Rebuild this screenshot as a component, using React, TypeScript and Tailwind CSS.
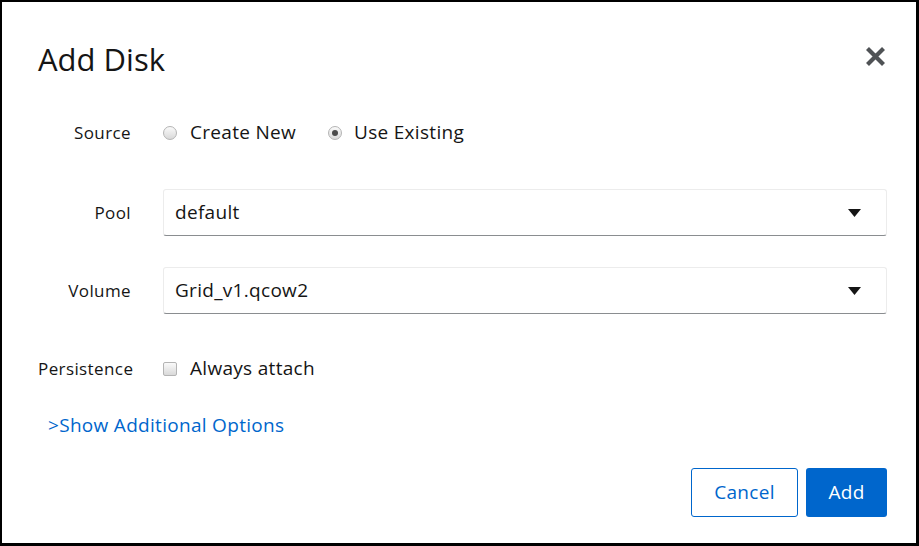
import { useState } from 'react'

const font = { fontFamily: '"Open Sans", "Liberation Sans", sans-serif' }

function Radio({ checked }: { checked?: boolean }) {
  return (
    <span className="flex h-[14px] w-[14px] items-center justify-center rounded-full border border-[#b4b4b4] bg-gradient-to-b from-[#fafafa] to-[#d9d9d9]">
      {checked && <span className="h-[6px] w-[6px] rounded-full bg-[#4a4a4a]" />}
    </span>
  )
}

function Caret() {
  return (
    <svg width="13" height="8" viewBox="0 0 13 8" aria-hidden="true">
      <path d="M0 0h13L6.5 8z" fill="#151515" />
    </svg>
  )
}

function SelectBox({ value }: { value: string }) {
  return (
    <div className="flex h-[47px] w-full items-center justify-between rounded-[3px] border border-[#ececec] border-b-[#8a8d90] pl-[11px] pr-[25px] text-[19px] tracking-[0.3px] text-[#151515]">
      <span>{value}</span>
      <Caret />
    </div>
  )
}

function Label({ children }: { children: string }) {
  return <div className="text-right text-[17px] tracking-[0.4px] text-[#151515]">{children}</div>
}

export default function App() {
  const [source] = useState('existing')

  return (
    <div
      style={font}
      className="flex h-[546px] w-[919px] flex-col border-t-2 border-l-2 border-r-[3px] border-b-[3px] border-black bg-white pl-[36px] pr-[29px]"
    >
      {/* Header */}
      <div className="flex items-start justify-between pt-[39px]">
        <h1 className="text-[31px] leading-[36px] text-[#151515]">Add Disk</h1>
        <button className="mt-[5px] mr-[1px]" aria-label="Close">
          <svg width="21" height="21" viewBox="0 0 21 21" aria-hidden="true">
            <path d="M2.5 2.5l16 16M18.5 2.5l-16 16" stroke="#4f5255" strokeWidth="4.2" />
          </svg>
        </button>
      </div>

      {/* Form */}
      <div className="mt-[32px] grid grid-cols-[93px_1fr] items-center gap-x-[32px]">
        <Label>Source</Label>
        <div className="flex h-[47px] items-center text-[19px] tracking-[0.3px] text-[#151515]">
          <Radio checked={source === 'new'} />
          <span className="ml-[13px]">Create New</span>
          <span className="ml-[32px]" />
          <Radio checked={source === 'existing'} />
          <span className="ml-[12px]">Use Existing</span>
        </div>

        <div className="col-span-2 h-[33px]" />

        <Label>Pool</Label>
        <SelectBox value="default" />

        <div className="col-span-2 h-[31px]" />

        <Label>Volume</Label>
        <SelectBox value="Grid_v1.qcow2" />

        <div className="col-span-2 h-[31px]" />

        <Label>Persistence</Label>
        <div className="flex h-[47px] items-center text-[19px] tracking-[0.3px] text-[#151515]">
          <span className="h-[14px] w-[14px] rounded-[2px] border border-[#b4b4b4] bg-gradient-to-b from-[#fafafa] to-[#d9d9d9]" />
          <span className="ml-[13px]">Always attach</span>
        </div>
      </div>

      <div className="mt-[21px] pl-[10px] text-[19px] leading-[24px] tracking-[0.3px] text-[#0066cc]">
        &gt;Show Additional Options
      </div>

      {/* Footer */}
      <div className="mt-[31px] flex justify-end gap-[8px]">
        <button className="h-[49px] w-[107px] rounded-[3px] border border-[#0066cc] text-[19px] tracking-[0.3px] text-[#0066cc]">
          Cancel
        </button>
        <button className="h-[49px] w-[81px] rounded-[3px] bg-[#0066cc] text-[19px] tracking-[0.3px] text-white">
          Add
        </button>
      </div>
    </div>
  )
}
